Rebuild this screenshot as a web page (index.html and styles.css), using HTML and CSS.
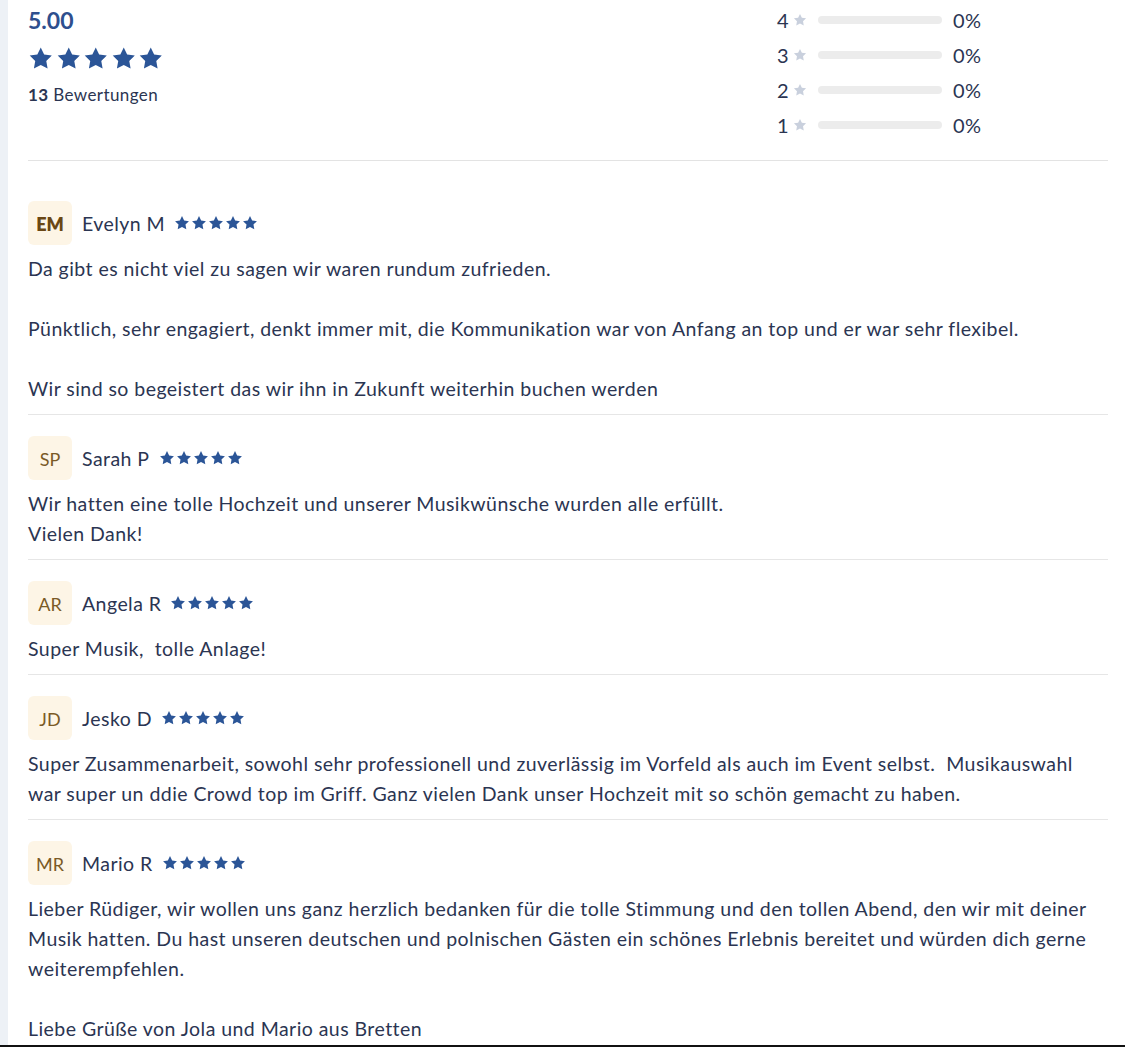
FILE: index.html
```html
<!DOCTYPE html>
<html lang="de">
<head>
<meta charset="utf-8">
<link rel="stylesheet" href="styles.css">
</head>
<body>
<svg width="0" height="0" class="defs">
  <defs>
    <symbol id="star" viewBox="0 0 24 24"><path d="M12 1.6l3.2 6.6 7.2 1-5.2 5.1 1.25 7.2L12 18.1l-6.45 3.4 1.25-7.2-5.2-5.1 7.2-1z"/></symbol>
  </defs>
</svg>
<div class="page">
  <main class="content">
    <section class="summary">
      <div class="score">
        <div class="avg">5.00</div>
        <div class="big-stars">
          <svg><use href="#star"/></svg><svg><use href="#star"/></svg><svg><use href="#star"/></svg><svg><use href="#star"/></svg><svg><use href="#star"/></svg>
        </div>
        <div class="count"><b>13</b> Bewertungen</div>
      </div>
      <div class="histogram">
        <div class="hrow"><span class="hnum">4</span><svg class="hstar"><use href="#star"/></svg><span class="bar"></span><span class="pct">0%</span></div>
        <div class="hrow"><span class="hnum">3</span><svg class="hstar"><use href="#star"/></svg><span class="bar"></span><span class="pct">0%</span></div>
        <div class="hrow"><span class="hnum">2</span><svg class="hstar"><use href="#star"/></svg><span class="bar"></span><span class="pct">0%</span></div>
        <div class="hrow"><span class="hnum">1</span><svg class="hstar"><use href="#star"/></svg><span class="bar"></span><span class="pct">0%</span></div>
      </div>
    </section>

    <section class="reviews">
      <article class="review">
        <header class="rhead">
          <div class="avatar bold">EM</div>
          <span class="name">Evelyn M</span>
          <span class="stars"><svg><use href="#star"/></svg><svg><use href="#star"/></svg><svg><use href="#star"/></svg><svg><use href="#star"/></svg><svg><use href="#star"/></svg></span>
        </header>
        <p class="text">Da gibt es nicht viel zu sagen wir waren rundum zufrieden.

Pünktlich, sehr engagiert, denkt immer mit, die Kommunikation war von Anfang an top und er war sehr flexibel.

Wir sind so begeistert das wir ihn in Zukunft weiterhin buchen werden</p>
      </article>

      <article class="review">
        <header class="rhead">
          <div class="avatar">SP</div>
          <span class="name">Sarah P</span>
          <span class="stars"><svg><use href="#star"/></svg><svg><use href="#star"/></svg><svg><use href="#star"/></svg><svg><use href="#star"/></svg><svg><use href="#star"/></svg></span>
        </header>
        <p class="text">Wir hatten eine tolle Hochzeit und unserer Musikwünsche wurden alle erfüllt.
Vielen Dank!</p>
      </article>

      <article class="review">
        <header class="rhead">
          <div class="avatar">AR</div>
          <span class="name">Angela R</span>
          <span class="stars"><svg><use href="#star"/></svg><svg><use href="#star"/></svg><svg><use href="#star"/></svg><svg><use href="#star"/></svg><svg><use href="#star"/></svg></span>
        </header>
        <p class="text">Super Musik,  tolle Anlage!</p>
      </article>

      <article class="review">
        <header class="rhead">
          <div class="avatar">JD</div>
          <span class="name">Jesko D</span>
          <span class="stars"><svg><use href="#star"/></svg><svg><use href="#star"/></svg><svg><use href="#star"/></svg><svg><use href="#star"/></svg><svg><use href="#star"/></svg></span>
        </header>
        <p class="text">Super Zusammenarbeit, sowohl sehr professionell und zuverlässig im Vorfeld als auch im Event selbst.  Musikauswahl war super un ddie Crowd top im Griff. Ganz vielen Dank unser Hochzeit mit so schön gemacht zu haben.</p>
      </article>

      <article class="review last">
        <header class="rhead">
          <div class="avatar">MR</div>
          <span class="name">Mario R</span>
          <span class="stars"><svg><use href="#star"/></svg><svg><use href="#star"/></svg><svg><use href="#star"/></svg><svg><use href="#star"/></svg><svg><use href="#star"/></svg></span>
        </header>
        <p class="text">Lieber Rüdiger, wir wollen uns ganz herzlich bedanken für die tolle Stimmung und den tollen Abend, den wir mit deiner Musik hatten. Du hast unseren deutschen und polnischen Gästen ein schönes Erlebnis bereitet und würden dich gerne weiterempfehlen.

Liebe Grüße von Jola und Mario aus Bretten</p>
      </article>
    </section>
  </main>
</div>
</body>
</html>
```
FILE: styles.css
```css
* { box-sizing: border-box; }
html, body {
  margin: 0;
  padding: 0;
  background: #ffffff;
}
body {
  font-family: "Lato", "Noto Sans", sans-serif;
  color: #2b3552;
  height: 1047px;
  overflow: hidden;
  border-bottom: 2px solid #111;
}
.defs { position: absolute; }
.page {
  display: flex;
  border-left: 8px solid #edf1f6;
  min-height: 1047px;
}
.content {
  flex: 1;
  padding: 0 17px 0 20px;
}
.summary {
  display: flex;
  justify-content: space-between;
  border-bottom: 1px solid #e3e3e3;
  padding: 2px 125px 18px 0;
}
.score { padding-top: 4px; }
.avg {
  font-size: 23px;
  font-weight: 700;
  color: #2e4f8e;
  line-height: 28px;
}
.big-stars {
  display: flex;
  gap: 2px;
  margin-top: 11px;
  height: 28px;
}
.big-stars svg {
  width: 25.5px;
  height: 27px;
  fill: #2b5597;
}
.count {
  font-size: 17px;
  letter-spacing: 0.4px;
  margin-top: 11px;
  color: #2b3552;
}
.count b { font-weight: 700; }
.histogram {
  display: flex;
  flex-direction: column;
}
.hrow {
  display: flex;
  align-items: center;
  height: 35px;
}
.hnum {
  font-size: 20px;
  width: 16px;
}
.hstar {
  width: 14px;
  height: 14px;
  fill: #c9d0dd;
  margin-right: 11px;
}
.bar {
  width: 124px;
  height: 8px;
  border-radius: 4px;
  background: #ececec;
  margin-right: 11px;
}
.pct {
  font-size: 20px;
  width: 30px;
  letter-spacing: 0.3px;
}

.reviews { padding-top: 19px; }
.review {
  padding: 21px 0 10px;
  border-bottom: 1px solid #e6e6e6;
}
.review.last { border-bottom: none; }
.rhead {
  display: flex;
  align-items: center;
}
.avatar {
  width: 44px;
  height: 44px;
  border-radius: 6px;
  background: #fdf5e6;
  color: #7a5a26;
  font-size: 18px;
  display: flex;
  align-items: center;
  justify-content: center;
  margin-right: 10px;
  padding-top: 2px;
}
.avatar.bold { font-weight: 800; color: #6a4714; }
.name {
  font-size: 19.5px;
  letter-spacing: 0.45px;
  margin-right: 9px;
}
.stars {
  display: flex;
  gap: 1px;
}
.stars svg {
  width: 16px;
  height: 16px;
  fill: #2b5597;
}
.text {
  margin: 9px 0 0;
  font-size: 19.5px;
  letter-spacing: 0.45px;
  line-height: 30px;
  white-space: pre-wrap;
}
```
